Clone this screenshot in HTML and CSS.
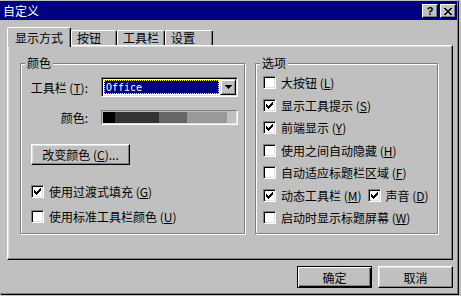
FILE: index.html
```html
<!DOCTYPE html>
<html lang="zh-CN">
<head>
  <meta charset="UTF-8" />
  <title>自定义</title>
  <link rel="stylesheet" href="styles.css">
</head>
<body>
  <div class="window">
    <div class="titlebar">
      <span class="title">自定义</span>
      <div class="title-buttons">
        <span class="title-btn help">?</span>
        <span class="title-btn close">
          <svg width="8" height="7" viewBox="0 0 8 7" shape-rendering="crispEdges"><path d="M0 0h2v1H0zM6 0h2v1H6zM1 1h2v1H1zM5 1h2v1H5zM2 2h4v1H2zM3 3h2v1H3zM2 4h4v1H2zM1 5h2v1H1zM5 5h2v1H5zM0 6h2v1H0zM6 6h2v1H6z" fill="#000"/></svg>
        </span>
      </div>
    </div>

    <div class="tabs">
      <div class="tab active">显示方式</div>
      <div class="tab">按钮</div>
      <div class="tab">工具栏</div>
      <div class="tab wide">设置</div>
    </div>

    <div class="panel">
      <div class="group color-group">
        <span class="legend">颜色</span>

        <div class="field">
          <label class="field-label">工具栏 (<u>T</u>):</label>
          <div class="combo">
            <div class="combo-value">Office</div>
            <div class="combo-arrow">
              <svg width="7" height="4" viewBox="0 0 7 4" shape-rendering="crispEdges"><path d="M0 0h7v1H0zM1 1h5v1H1zM2 2h3v1H2zM3 3h1v1H3z" fill="#000"/></svg>
            </div>
          </div>
        </div>

        <div class="field swatch-field">
          <label class="field-label">颜色:</label>
          <div class="swatch">
            <span class="seg seg-1"></span>
            <span class="seg seg-2"></span>
            <span class="seg seg-3"></span>
            <span class="seg seg-4"></span>
          </div>
        </div>

        <button class="btn change-btn">改变颜色 (<u>C</u>)...</button>

        <div class="checks">
          <div class="check">
            <span class="box"><svg width="7" height="7" viewBox="0 0 7 7" shape-rendering="crispEdges"><path d="M0 2H1V3H2V4H3V3H4V2H5V1H6V0H7V3H6V4H5V5H4V6H3V7H2V6H1V5H0Z" fill="#000"/></svg></span>
            <span>使用过渡式填充 (<u>G</u>)</span>
          </div>
          <div class="check">
            <span class="box"></span>
            <span>使用标准工具栏颜色 (<u>U</u>)</span>
          </div>
        </div>
      </div>

      <div class="group options-group">
        <span class="legend">选项</span>
        <div class="checks">
          <div class="check">
            <span class="box"></span>
            <span>大按钮 (<u>L</u>)</span>
          </div>
          <div class="check">
            <span class="box"><svg width="7" height="7" viewBox="0 0 7 7" shape-rendering="crispEdges"><path d="M0 2H1V3H2V4H3V3H4V2H5V1H6V0H7V3H6V4H5V5H4V6H3V7H2V6H1V5H0Z" fill="#000"/></svg></span>
            <span>显示工具提示 (<u>S</u>)</span>
          </div>
          <div class="check">
            <span class="box"><svg width="7" height="7" viewBox="0 0 7 7" shape-rendering="crispEdges"><path d="M0 2H1V3H2V4H3V3H4V2H5V1H6V0H7V3H6V4H5V5H4V6H3V7H2V6H1V5H0Z" fill="#000"/></svg></span>
            <span>前端显示 (<u>Y</u>)</span>
          </div>
          <div class="check">
            <span class="box"></span>
            <span>使用之间自动隐藏 (<u>H</u>)</span>
          </div>
          <div class="check">
            <span class="box"></span>
            <span>自动适应标题栏区域 (<u>F</u>)</span>
          </div>
          <div class="check-pair">
            <div class="check">
              <span class="box"><svg width="7" height="7" viewBox="0 0 7 7" shape-rendering="crispEdges"><path d="M0 2H1V3H2V4H3V3H4V2H5V1H6V0H7V3H6V4H5V5H4V6H3V7H2V6H1V5H0Z" fill="#000"/></svg></span>
              <span>动态工具栏 (<u>M</u>)</span>
            </div>
            <div class="check">
              <span class="box"><svg width="7" height="7" viewBox="0 0 7 7" shape-rendering="crispEdges"><path d="M0 2H1V3H2V4H3V3H4V2H5V1H6V0H7V3H6V4H5V5H4V6H3V7H2V6H1V5H0Z" fill="#000"/></svg></span>
              <span>声音 (<u>D</u>)</span>
            </div>
          </div>
          <div class="check">
            <span class="box"></span>
            <span>启动时显示标题屏幕 (<u>W</u>)</span>
          </div>
        </div>
      </div>
    </div>

    <div class="actions">
      <button class="btn default">确定</button>
      <button class="btn">取消</button>
    </div>
  </div>
</body>
</html>
```

FILE: styles.css
```css
* {
  box-sizing: border-box;
  margin: 0;
  padding: 0;
}

body {
  background: #c0c0c0;
  font-family: "Noto Sans CJK SC", sans-serif;
  font-size: 12px;
  line-height: 13px;
  color: #000;
  width: 461px;
  height: 296px;
  overflow: hidden;
}

u {
  text-decoration: underline;
  text-underline-offset: 1px;
}

.window {
  width: 458px;
  height: 294px;
  background: #c0c0c0;
  padding-top: 1px;
  border-right: 1px solid #808080;
  border-bottom: 1px solid #808080;
  box-shadow: 1px 1px 0 #000;
}

/* title bar */
.titlebar {
  height: 19px;
  background: #000080;
  display: flex;
  justify-content: space-between;
  align-items: flex-start;
  padding: 0 1px 0 3px;
}

.title {
  color: #fff;
  line-height: 19px;
}

.title-buttons {
  display: flex;
  gap: 2px;
  padding-top: 3px;
}

.title-btn {
  width: 16px;
  height: 14px;
  background: #c0c0c0;
  border: 1px solid;
  border-color: #fff #000 #000 #fff;
  box-shadow: inset -1px -1px 0 #808080;
  display: flex;
  align-items: center;
  justify-content: center;
}

.title-btn.help {
  font-family: "Liberation Sans", sans-serif;
  font-weight: bold;
  font-size: 11px;
  line-height: 11px;
}

/* tabs */
.tabs {
  display: flex;
  align-items: flex-end;
  height: 18px;
  margin: 7px 0 0 7px;
  position: relative;
  z-index: 1;
}

.tab {
  min-width: 46px;
  height: 15px;
  padding: 0 5px;
  background: #c0c0c0;
  border-top: 1px solid #fff;
  border-left: 1px solid #fff;
  border-right: 1px solid #000;
  border-radius: 2px 2px 0 0;
  box-shadow: inset -1px 0 0 #808080;
  line-height: 14px;
}

.tab.wide {
  min-width: 48px;
}

.tab.active {
  height: 20px;
  margin-bottom: -2px;
  padding: 3px 7px 0 7px;
}

/* panel */
.panel {
  width: 446px;
  height: 215px;
  margin-left: 7px;
  border: 1px solid;
  border-color: #fff #000 #000 #fff;
  box-shadow: inset -1px -1px 0 #808080, inset 1px 1px 0 #dfdfdf;
  display: flex;
  align-items: flex-start;
  padding: 17px 0 0 12px;
}

.group {
  position: relative;
  height: 171px;
  border: 1px solid #808080;
  box-shadow: 1px 1px 0 #fff, inset 1px 1px 0 #fff;
}

.legend {
  position: absolute;
  top: -8px;
  left: 4px;
  padding: 0 2px;
  background: #c0c0c0;
  line-height: 14px;
}

.color-group {
  width: 225px;
  padding: 13px 0 0 9px;
}

.options-group {
  width: 183px;
  margin-left: 10px;
  padding: 12px 0 0 7px;
}

.field {
  display: flex;
  align-items: center;
  height: 20px;
}

.swatch-field {
  height: 15px;
  margin-top: 13px;
}

.field-label {
  width: 58px;
  margin-right: 13px;
  text-align: right;
  white-space: nowrap;
}

.combo {
  width: 137px;
  height: 20px;
  border: 1px solid;
  border-color: #808080 #fff #fff #808080;
  box-shadow: inset 1px 1px 0 #000, inset -1px -1px 0 #dfdfdf;
  background: #fff;
  padding: 2px;
  display: flex;
}

.combo-value {
  flex: 1;
  margin-right: 1px;
  background: #000080;
  color: #fff;
  border: 1px dotted #ffff00;
  font-family: "DejaVu Sans Mono", monospace;
  font-size: 10px;
  line-height: 13px;
  padding-left: 1px;
}

.combo-arrow {
  width: 16px;
  height: 16px;
  margin: -1px -1px 0 0;
  background: #c0c0c0;
  border: 1px solid;
  border-color: #dfdfdf #000 #000 #dfdfdf;
  box-shadow: inset 1px 1px 0 #fff, inset -1px -1px 0 #808080;
  display: flex;
  align-items: center;
  justify-content: center;
}

.swatch {
  width: 137px;
  height: 15px;
  border: 1px solid;
  border-color: #808080 #fff #fff #808080;
  box-shadow: inset -1px -1px 0 #dfdfdf;
  background: #c0c0c0;
  padding: 1px 2px 1px 1px;
  display: flex;
}

.seg {
  height: 100%;
}

.seg-1 { width: 12px; background: #000; }
.seg-2 { width: 44px; background: #333; }
.seg-3 { width: 28px; background: #666; }
.seg-4 { width: 40px; background: #999; }

.btn {
  font-family: "Noto Sans CJK SC", sans-serif;
  font-size: 12px;
  line-height: 13px;
  color: #000;
  background: #c0c0c0;
  border: 1px solid;
  border-color: #fff #000 #000 #fff;
  box-shadow: inset -1px -1px 0 #808080, inset 1px 1px 0 #dfdfdf;
  display: block;
}

.change-btn {
  width: 99px;
  height: 21px;
  margin: 19px 0 0 1px;
}

.checks {
  display: flex;
  flex-direction: column;
  gap: 9.5px;
}

.color-group .checks {
  margin: 20px 0 0 1px;
  gap: 12px;
}

.check {
  display: flex;
  align-items: center;
  height: 13px;
  white-space: nowrap;
}

.check-pair {
  display: flex;
  gap: 6px;
}

.box {
  width: 13px;
  height: 13px;
  margin-right: 5px;
  background: #fff;
  border: 1px solid;
  border-color: #808080 #fff #fff #808080;
  box-shadow: inset 1px 1px 0 #000, inset -1px -1px 0 #dfdfdf;
  display: flex;
  align-items: center;
  justify-content: center;
  flex-shrink: 0;
}

/* dialog buttons */
.actions {
  display: flex;
  justify-content: flex-end;
  gap: 6px;
  margin-top: 6px;
  padding-right: 4px;
}

.actions .btn {
  width: 75px;
  height: 22px;
}

.actions .btn.default {
  border: 1px solid #000;
  box-shadow: inset 1px 1px 0 #fff, inset -1px -1px 0 #000, inset -2px -2px 0 #808080;
}
```
